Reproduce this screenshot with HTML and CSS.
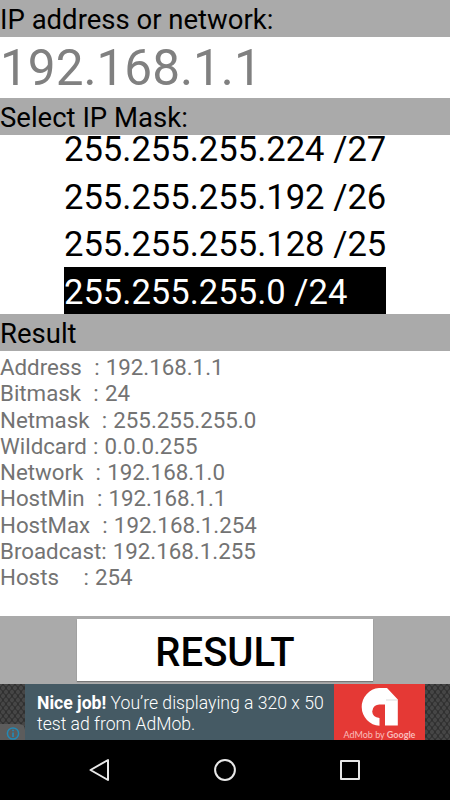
FILE: index.html
```
<!DOCTYPE html>
<html lang="en">
<head>
	<meta charset="UTF-8">
	<title>IP Calculator</title>
	<link rel="stylesheet" href="styles.css">
</head>
<body>

<div class="container">
	<h2>IP address or network:</h2>
	<input id="ip" type="text" placeholder="192.168.1.1">
	<h2>Select IP Mask:</h2>
	<div class="mask">
		<ul>
			<li>255.255.255.224 /27</li>
			<li>255.255.255.192 /26</li>
			<li>255.255.255.128 /25</li>
			<li class="active">255.255.255.0 /24</li>
		</ul>
	</div>
	<h2>Result</h2>
	<pre class="result">Address  : 192.168.1.1
Bitmask  : 24
Netmask  : 255.255.255.0
Wildcard : 0.0.0.255
Network  : 192.168.1.0
HostMin  : 192.168.1.1
HostMax  : 192.168.1.254
Broadcast: 192.168.1.255
Hosts    : 254</pre>
	<div class="bottom">
		<button>RESULT</button>
	</div>
	<div class="ad">
		<svg class="info" width="25" height="16" viewBox="0 0 25 16">
			<path d="M0 0h19q6 0 6 6v10H0z" fill="#5c5c5c"/>
			<circle cx="13" cy="9.500" r="5.600" fill="none" stroke="#2389b5" stroke-width="1.500"/>
			<path d="M13 8.500v4.500M13 5.700v1.500" stroke="#2389b5" stroke-width="1.700"/>
		</svg>
		<p><b>Nice job!</b> You’re displaying a 320 x 50<br>test ad from AdMob.</p>
		<div class="admob">
			<svg width="41" height="40" viewBox="0 0 41 40">
				<path d="M20.500 38.700A18.900 18.900 0 0 1 20 1H28L38.800 12.500V38.500H26V17.500H21.500A7.200 7.200 0 0 0 13.200 24.500Q13.500 30 20.500 31z" fill="#fff"/>
				<path d="M27 13h11.500" stroke="#ccc" stroke-width=".7"/>
			</svg>
			<span>AdMob by <b>Google</b></span>
		</div>
	</div>
	<div class="nav">
		<svg viewBox="0 0 24 24"><path d="M2.500 12L20 2v20z"/></svg>
		<svg viewBox="0 0 24 24"><circle cx="12" cy="12" r="9.900"/></svg>
		<svg viewBox="0 0 24 24"><path d="M3 3h18v18H3z"/></svg>
	</div>
</div>

</body>
</html>
```
FILE: styles.css
```
body,h2,ul,p,pre {
	margin: 0;
	padding: 0;
}
li {
	list-style: none;
}
body {
	font-family: Roboto, sans-serif;
	background-color: #fff;
}
.container {
	width: 450px;
	height: 800px;
	display: flex;
	flex-direction: column;
	overflow: hidden;
}
h2 {
	height: 37px;
	line-height: 40px;
	font-size: 27.500px;
	font-weight: normal;
	background-color: #aaa;
	color: #000;
	flex: none;
}
#ip {
	height: 61px;
	box-sizing: border-box;
	border: 0;
	padding: 0;
	font-family: inherit;
	font-size: 49.500px;
	background-color: #fff;
}
#ip::placeholder {
	color: #808080;
}
.mask {
	height: 179px;
	display: flex;
	justify-content: center;
	align-items: flex-end;
	overflow: hidden;
}
.mask li {
	width: 322px;
	height: 47.600px;
	line-height: 50px;
	font-size: 34.600px;
	white-space: nowrap;
}
.mask li.active {
	height: 47px;
	background-color: #000;
	color: #fff;
}
.result {
	flex: 1;
	padding-top: 3px;
	font-family: Roboto, sans-serif;
	font-size: 22.300px;
	line-height: 26.250px;
	word-spacing: .6px;
	color: #737373;
}
.bottom {
	height: 68px;
	padding-top: 3px;
	box-sizing: border-box;
	text-align: center;
	background-color: #aaa;
}
.bottom button {
	width: 296px;
	height: 62px;
	border: 0;
	padding: 4px 0 0;
	background-color: #fff;
	box-shadow: 0 1px 1px #777;
	font-family: inherit;
	font-size: 40px;
	font-weight: 500;
	color: #000;
}
.ad {
	height: 56px;
	display: flex;
	align-items: flex-end;
	background-color: #303030;
	background-image: radial-gradient(#464646 35%, transparent 50%), radial-gradient(#464646 35%, transparent 50%);
	background-size: 6px 8px;
	background-position: 0 0, 3px 4px;
}
.ad p {
	width: 309px;
	height: 56px;
	box-sizing: border-box;
	padding: 9px 0 0 12px;
	background-color: #455a64;
	color: #fff;
	font-size: 17.600px;
	font-weight: 300;
	line-height: 21px;
	white-space: nowrap;
}
.ad p b {
	font-weight: 700;
}
.admob {
	width: 91px;
	height: 56px;
	background-color: #e53935;
	color: #f9bdbb;
	text-align: center;
	overflow: hidden;
}
.admob svg {
	display: block;
	margin: 3px auto 2px;
}
.admob span {
	display: block;
	font-family: Lato, sans-serif;
	font-size: 9px;
	line-height: 11px;
	white-space: nowrap;
}
.nav {
	height: 60px;
	display: flex;
	justify-content: center;
	align-items: center;
	gap: 101px;
	background-color: #000;
}
.nav svg {
	width: 24px;
	height: 24px;
	fill: none;
	stroke: #e8e8e8;
	stroke-width: 2;
	stroke-linejoin: round;
}
```
